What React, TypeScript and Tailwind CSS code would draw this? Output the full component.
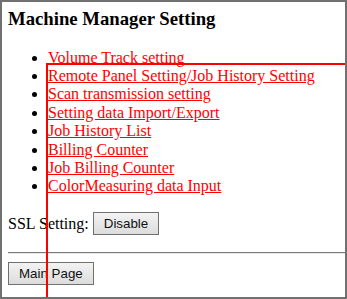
import React from "react"

const links = [
  "Volume Track setting",
  "Remote Panel Setting/Job History Setting",
  "Scan transmission setting",
  "Setting data Import/Export",
  "Job History List",
  "Billing Counter",
  "Job Billing Counter",
  "ColorMeasuring data Input",
]

const btn =
  "border border-[#707070] bg-gradient-to-b from-[#f3f3f3] to-[#dcdcdc] px-[10px] py-[3px] font-['Liberation_Sans',Arial,sans-serif] text-[13.33px] leading-[15px] text-[#111]"

export default function App() {
  return (
    <div className="relative h-[299px] w-[347px] overflow-hidden border-2 border-[#707070] bg-white font-['Liberation_Serif','Times_New_Roman',serif] text-[16px] text-black">
      <div className="pl-[6px] pt-[6px]">
        <h3 className="text-[18.72px] font-bold leading-[21.5px]">
          Machine Manager Setting
        </h3>
        <ul className="mt-[19px] list-disc pl-10 leading-[18.4px]">
          {links.map((t) => (
            <li key={t}>
              <a href="#" className="text-[#ff0000] underline">
                {t}
              </a>
            </li>
          ))}
        </ul>
        <p className="mt-[16px] flex items-center gap-[4px]">
          <span>SSL Setting:</span>
          <button className={btn}>Disable</button>
        </p>
        <hr className="mt-[16px] h-0 border-0 border-t border-b border-t-[#7a7a7a] border-b-[#e8e8e8]" />
        <div className="mt-[7px]">
          <button className={btn}>Main Page</button>
        </div>
      </div>
      <div className="pointer-events-none absolute left-[44px] top-[61px] h-[400px] w-[400px] border-2 border-[#ff0000]" />
    </div>
  )
}
